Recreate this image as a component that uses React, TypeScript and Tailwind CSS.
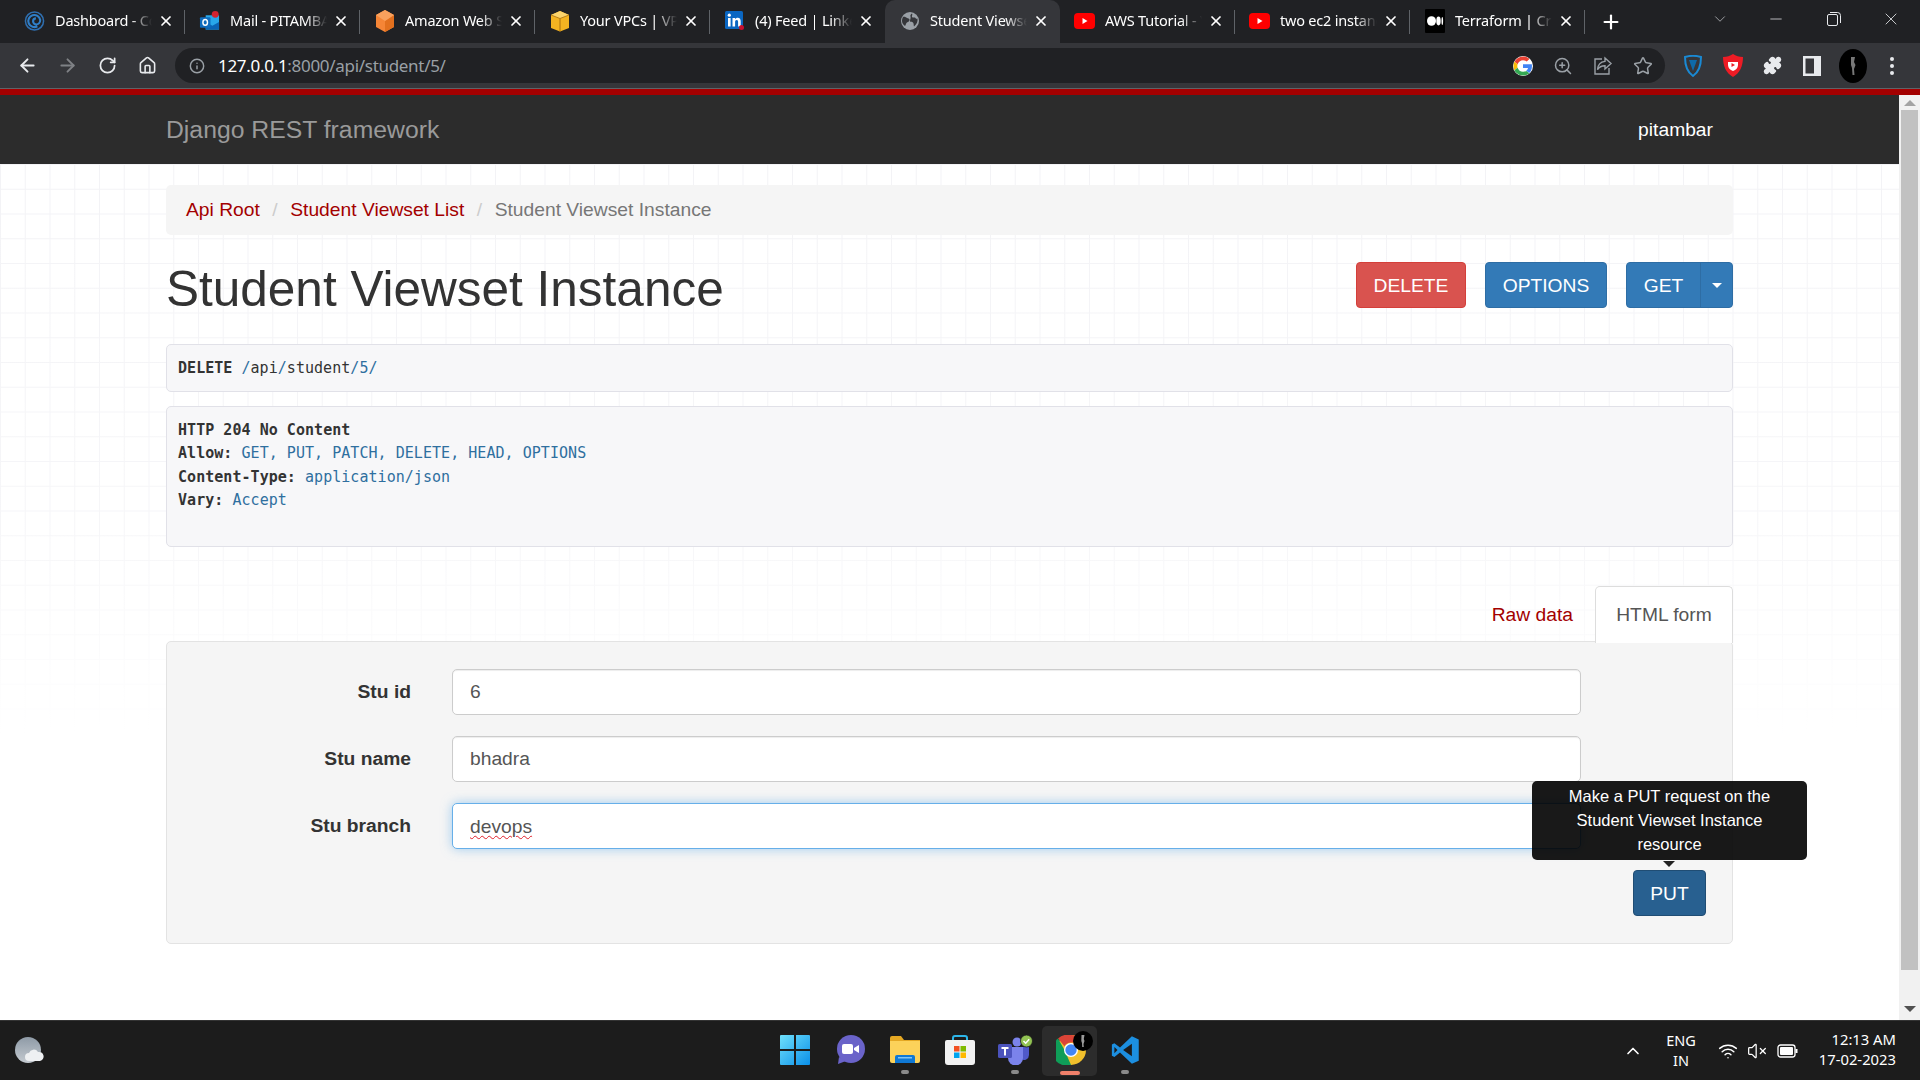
import type { ReactNode } from "react";
import {
  ArrowLeft,
  ArrowRight,
  RotateCw,
  Home,
  Info,
  ZoomIn,
  Star,
  Puzzle,
  X,
  Plus,
  ChevronDown,
  ChevronUp,
  Minus,
  Wifi,
  VolumeX,
} from "lucide-react";

const sans = "font-['Liberation_Sans',Arial,sans-serif]";

function DashIcon() {
  return (
    <svg width="22" height="22" viewBox="0 0 22 22" fill="none">
      <circle cx="11" cy="11" r="9.5" stroke="#2f6fb0" strokeWidth="1.6" />
      <path d="M14 16.5a6.3 6.3 0 1 1 3-6.5c0 3-2.2 4.6-4.2 4.6a3.3 3.3 0 0 1-3.3-3.3c0-1.8 1.4-3 3-3" stroke="#2f7fc8" strokeWidth="2.2" />
    </svg>
  );
}

function OutlookIcon() {
  return (
    <svg width="22" height="22" viewBox="0 0 22 22">
      <rect x="7" y="5" width="14" height="15" fill="#28a8ea" />
      <path d="M7 12l7 4 7-4v8H7z" fill="#0a64b4" />
      <rect x="1" y="7" width="11" height="11" rx="1" fill="#0f6cbd" />
      <ellipse cx="6.5" cy="12.5" rx="2.4" ry="3" fill="none" stroke="#fff" strokeWidth="1.5" />
      <circle cx="17" cy="4" r="3.6" fill="#d3232f" />
    </svg>
  );
}

function HexIcon() {
  return (
    <svg width="20" height="24" viewBox="0 0 20 24">
      <path d="M10 1l9 5v12l-9 5-9-5V6z" fill="#f58536" />
      <path d="M10 12l9-6v12l-9 5z" fill="#e2701e" />
      <path d="M10 1l9 5-9 6-9-6z" fill="#f9a15d" />
    </svg>
  );
}

function BoxIcon() {
  return (
    <svg width="20" height="22" viewBox="0 0 20 22">
      <path d="M1 5l9-4 9 4v13l-9 3.5L1 18z" fill="#f4b321" />
      <path d="M1 5l9 3.5L19 5l-9-4z" fill="#fbd36b" />
      <path d="M10 8.5v13" stroke="#a86f0d" strokeWidth="1" />
      <path d="M1 5l9 3.5L19 5" stroke="#a86f0d" strokeWidth="0.8" fill="none" />
    </svg>
  );
}

function LinkedInIcon() {
  return (
    <svg width="20" height="22" viewBox="0 0 20 22">
      <rect x="0" y="1" width="18" height="18" rx="1.5" fill="#0a66c2" />
      <rect x="3" y="8" width="2.6" height="8.5" fill="#fff" />
      <circle cx="4.3" cy="5.2" r="1.6" fill="#fff" />
      <path d="M7.5 8h2.5v1.3c.6-1 1.6-1.5 2.7-1.5 2.2 0 3 1.4 3 3.7v5h-2.6v-4.4c0-1.2-.3-2-1.4-2s-1.6.9-1.6 2v4.4H7.5z" fill="#fff" />
      <circle cx="16.5" cy="17.5" r="2.5" fill="#c8102e" />
    </svg>
  );
}

function GlobeIcon() {
  return (
    <svg width="20" height="20" viewBox="0 0 20 20">
      <circle cx="10" cy="10" r="9" fill="#9aa0a6" />
      <path d="M3 6c2-.5 3 .5 4 1s2 0 2.5 1.5S8 11 7 11.5 6 14 5 15c-1.5-1-3-3-3-5 0-1.5.5-3 1-4zM12 2.5c1 1-.5 2.5 0 3.5s3 0 3.5 1 1.5 1 2 .5c.5 3-1 6-3.500 8-.5-1 0-3-1-4s-3 0-3-1.500 1-3 .5-4.500S11 3 12 2.500z" fill="#35363a" />
    </svg>
  );
}

function YouTubeIcon() {
  return (
    <svg width="21" height="16" viewBox="0 0 21 16">
      <rect width="21" height="16" rx="4" fill="#f00" />
      <path d="M8.5 5l5 3-5 3z" fill="#fff" />
    </svg>
  );
}

function MediumIcon() {
  return (
    <svg width="20" height="24" viewBox="0 0 20 24">
      <rect width="20" height="24" rx="1" fill="#000" />
      <ellipse cx="6.5" cy="12" rx="4.5" ry="4.8" fill="#fff" />
      <ellipse cx="13.5" cy="12" rx="2.2" ry="4.4" fill="#fff" />
      <ellipse cx="17.3" cy="12" rx="0.8" ry="4" fill="#fff" />
    </svg>
  );
}

type TabInfo = { title: string; icon: ReactNode; active?: boolean; sep?: boolean };

const tabs: TabInfo[] = [
  { title: "Dashboard - Console", icon: <DashIcon />, sep: true },
  { title: "Mail - PITAMBAR", icon: <OutlookIcon />, sep: true },
  { title: "Amazon Web Services", icon: <HexIcon />, sep: true },
  { title: "Your VPCs | VPC", icon: <BoxIcon />, sep: true },
  { title: "(4) Feed | LinkedIn", icon: <LinkedInIcon /> },
  { title: "Student Viewset", icon: <GlobeIcon />, active: true },
  { title: "AWS Tutorial - YT", icon: <YouTubeIcon />, sep: true },
  { title: "two ec2 instances", icon: <YouTubeIcon />, sep: true },
  { title: "Terraform | Create", icon: <MediumIcon />, sep: true },
];

function Tab({ title, icon, active, sep }: TabInfo) {
  return (
    <div className={`relative flex h-[43px] w-[175px] shrink-0 items-center pb-[2px] pl-[14px] ${active ? "rounded-t-[10px] bg-[#35363a]" : ""}`}>
      <div className="flex w-[21px] shrink-0 justify-center">{icon}</div>
      <div className="ml-[10px] w-[97px] overflow-hidden font-['Noto_Sans',sans-serif] text-[14.5px] tracking-[-0.2px] whitespace-nowrap text-white [mask-image:linear-gradient(90deg,#000_78%,transparent_100%)]">
        {title}
      </div>
      <X className="ml-[6px] size-[16px] shrink-0 text-white" strokeWidth={2.6} />
      {sep && <div className="absolute top-[10px] right-0 h-[24px] w-px bg-[#5f6368]" />}
    </div>
  );
}

function TabStrip() {
  return (
    <div className="flex h-[43px] items-center bg-[#202124] pl-[10px]">
      {tabs.map((t) => (
        <Tab key={t.title} {...t} />
      ))}
      <Plus className="ml-[15px] size-[22px] text-white" strokeWidth={2.4} />
      <ChevronDown className="ml-[89px] size-[18px] -translate-y-[3px] text-[#c4c6c9]" strokeWidth={1} />
      <Minus className="ml-[38px] size-[18px] -translate-y-[3px] text-[#e8eaed]" strokeWidth={1} />
      <svg className="ml-[42px] -translate-y-[3px]" width="14" height="14" viewBox="0 0 14 14" fill="none" stroke="#e8eaed">
        <rect x="0.5" y="2.5" width="10" height="11" rx="1.5" />
        <path d="M3 .5h7.5a3 3 0 0 1 3 3V11" />
      </svg>
      <X className="ml-[40px] size-[20px] -translate-y-[3px] text-[#e8eaed]" strokeWidth={1} />
    </div>
  );
}

function GoogleIcon() {
  return (
    <svg width="20" height="20" viewBox="0 0 48 48" className="rounded-full bg-white">
      <path fill="#EA4335" d="M24 10c3.5 0 6.5 1.2 9 3.4l6.5-6.500C35.500 3.200 30.200 1 24 1 15 1 7.200 6.200 3.400 13.700l7.600 5.900C12.800 14 17.900 10 24 10z" />
      <path fill="#4285F4" d="M45.500 24.500c0-1.600-.1-3.100-.4-4.500H24v8.500h12.100c-.5 2.800-2.100 5.100-4.500 6.700l7.300 5.700c4.300-4 6.600-9.800 6.600-16.400z" />
      <path fill="#FBBC05" d="M11 28.400c-.5-1.400-.7-2.900-.7-4.400s.3-3 .7-4.400l-7.600-5.900C1.900 16.800 1 20.300 1 24s.9 7.200 2.400 10.300z" />
      <path fill="#34A853" d="M24 47c6.200 0 11.400-2 15.200-5.600l-7.300-5.700c-2 1.400-4.700 2.200-7.900 2.200-6.100 0-11.200-4-13-9.600l-7.600 5.900C7.200 41.800 15 47 24 47z" />
    </svg>
  );
}

function ShareIcon() {
  return (
    <svg width="20" height="20" viewBox="0 0 20 20" fill="none" stroke="#9aa0a6" strokeWidth="1.4">
      <path d="M9 3H2v15h14v-6" />
      <path d="M12 2l6 5.5-6 5.5V9.700c-3.500 0-6 1.300-7.500 4 .3-4.500 3-7.800 7.500-8.300z" />
    </svg>
  );
}

function ToolBar() {
  return (
    <div className="flex h-[45px] items-center bg-[#35363a] pl-[17px]">
      <ArrowLeft className="size-[21px] text-[#e8eaed]" strokeWidth={2.2} />
      <ArrowRight className="ml-[19px] size-[21px] text-[#7f8185]" strokeWidth={2.2} />
      <RotateCw className="ml-[20px] size-[19px] text-[#e8eaed]" strokeWidth={2.2} />
      <Home className="ml-[21px] size-[19px] text-[#e8eaed]" strokeWidth={2} />
      <div className="ml-[18px] flex h-[35px] w-[1490px] items-center rounded-full bg-[#202124] pl-[14px]">
        <Info className="size-[16px] text-[#9aa0a6]" strokeWidth={2.2} />
        <div className="ml-[13px] font-['Noto_Sans',sans-serif] text-[17px] tracking-[-0.3px] text-white">
          127.0.0.1<span className="text-[#9aa0a6]">:8000/api/student/5/</span>
        </div>
        <div className="ml-auto flex items-center gap-[20px] pr-[12px]">
          <GoogleIcon />
          <ZoomIn className="size-[20px] text-[#9aa0a6]" strokeWidth={1.8} />
          <ShareIcon />
          <Star className="size-[20px] text-[#9aa0a6]" strokeWidth={1.8} />
        </div>
      </div>
      <div className="ml-[19px] flex items-center gap-[21px]">
        <svg width="18" height="22" viewBox="0 0 18 22" fill="none">
          <path d="M1 2c5-1.500 11-1.500 16 0 0 8-2 15-8 19C3 17 1 10 1 2z" stroke="#1a8ad4" strokeWidth="2" />
          <path d="M5 5h8l-4 11z" fill="#0e6aa8" />
        </svg>
        <svg width="20" height="23" viewBox="0 0 20 23">
          <path d="M10 0c3 2 6 3 10 3 0 9-3 16-10 20C3 19 0 12 0 3c4 0 7-1 10-3z" fill="#ee1c25" />
          <path d="M5 8h10v3c0 3-2 5-5 6-3-1-5-3-5-6z" fill="#fff" />
          <path d="M8.5 9l3.500 2-3.500 2z" fill="#ee1c25" />
        </svg>
        <Puzzle className="-ml-px size-[19px] fill-[#e8eaed] text-[#e8eaed]" />
        <svg width="18" height="20" viewBox="0 0 18 20">
          <path d="M0 0h18v20H0z" fill="#e8eaed" />
          <path d="M2.5 2.5H11v15H2.5z" fill="#35363a" />
        </svg>
        <svg className="-ml-[3px]" width="28" height="34" viewBox="0 0 28 34">
          <ellipse cx="14" cy="17" rx="14" ry="17" fill="#000" />
          <path d="M12 8h4l-1 5 1.500 3-1.500 4 .5 6h-2l-.5-7-1-3z" fill="#777" />
        </svg>
        <svg className="ml-[2px]" width="4" height="18" viewBox="0 0 4 18" fill="#e8eaed">
          <circle cx="2" cy="2" r="2" />
          <circle cx="2" cy="9" r="2" />
          <circle cx="2" cy="16" r="2" />
        </svg>
      </div>
    </div>
  );
}

function Scrollbar() {
  return (
    <div className="relative flex w-[21px] shrink-0 flex-col items-center bg-[#f1f1f1]">
      <div className="mt-[5px] h-0 w-0 border-x-[6px] border-b-[6px] border-x-transparent border-b-[#a3a3a3]" />
      <div className="mt-[4px] h-[860px] w-[17px] bg-[#c1c1c1]" />
      <div className="mt-[36px] h-0 w-0 border-x-[6px] border-t-[6px] border-x-transparent border-t-[#505050]" />
    </div>
  );
}

function Btn({ label, className }: { label: string; className: string }) {
  return (
    <div className={`flex h-[46px] items-center justify-center rounded-[4px] border pt-[2px] text-[19.25px] text-white ${className}`}>
      {label}
    </div>
  );
}

function FormRow({ label, value, focus }: { label: string; value: ReactNode; focus?: boolean }) {
  return (
    <div className="flex h-[46px] items-center">
      <div className="w-[244px] text-right text-[19.25px] font-bold text-[#333]">{label}</div>
      <div
        className={`ml-[41px] flex h-[46px] w-[1129px] items-center rounded-[5px] border bg-white pl-[17px] text-[19.25px] text-[#555] ${
          focus
            ? "border-[#66afe9] shadow-[0_0_11px_rgba(102,175,233,0.6)]"
            : "border-[#ccc] shadow-[inset_0_1px_1px_rgba(0,0,0,0.075)]"
        }`}
      >
        {value}
      </div>
    </div>
  );
}

function Page() {
  return (
    <div className={`flex min-w-0 flex-1 flex-col ${sans}`}>
      <div className="flex h-[69px] shrink-0 items-center justify-between bg-[#2c2c2c] pr-[186px] pl-[166px]">
        <span className="text-[24.75px] text-[#9a9a9a]">Django REST framework</span>
        <span className="pt-px text-[19.25px] text-white">pitambar</span>
      </div>
      <div className="flex-1 bg-white bg-[linear-gradient(to_bottom,rgba(255,255,255,0)_0,rgba(255,255,255,0.25)_360px,#fff_570px),linear-gradient(#f3f3f6_1px,transparent_1px),linear-gradient(90deg,#f3f3f6_1px,transparent_1px)] bg-[length:100%_100%,24.75px_24.75px,24.75px_24.75px] px-[166px] pt-[21px]">
        <div className="w-[1567px]">
          <div className="flex h-[50px] items-center rounded-[5px] bg-[#f5f5f5] pl-[20px] text-[19.25px]">
            <span className="text-[#a30000]">Api Root</span>
            <span className="px-[12.5px] text-[#ccc]">/</span>
            <span className="text-[#a30000]">Student Viewset List</span>
            <span className="px-[12.5px] text-[#ccc]">/</span>
            <span className="text-[#777]">Student Viewset Instance</span>
          </div>

          <div className="mt-[27px] flex h-[82px] items-start justify-between">
            <h1 className="text-[49.5px] leading-[54px] text-[#333]">Student Viewset Instance</h1>
            <div className="flex gap-[19px]">
              <Btn label="DELETE" className="w-[110px] border-[#d43f3a] bg-[#d9534f]" />
              <Btn label="OPTIONS" className="w-[122px] border-[#2e6da4] bg-[#337ab7]" />
              <div className="flex h-[46px] w-[107px] rounded-[4px] border border-[#2e6da4] bg-[#337ab7] text-white">
                <div className="flex w-[74px] items-center justify-center border-r border-[#2e6da4] pt-[2px] text-[19.25px]">GET</div>
                <div className="flex flex-1 items-center justify-center">
                  <div className="mt-[1px] h-0 w-0 border-x-[5.5px] border-t-[5.5px] border-x-transparent border-t-white" />
                </div>
              </div>
            </div>
          </div>

          <div className="font-['DejaVu_Sans_Mono',monospace] text-[15px] leading-[23.57px] tracking-[0.04px] text-[#333]">
            <div className="flex h-[48px] items-center rounded-[5px] border border-[#e1e1e8] bg-[#f7f7f9] pt-px pl-[11px]">
              <b className="font-bold">DELETE</b>
              <span className="ml-[9px]">
                <span className="text-[#2f6f9f]">/</span>api<span className="text-[#2f6f9f]">/</span>student<span className="text-[#2f6f9f]">/</span>
                <span className="text-[#2f6f9f]">5/</span>
              </span>
            </div>
            <div className="mt-[14px] h-[141px] rounded-[5px] border border-[#e1e1e8] bg-[#f7f7f9] pt-[11.5px] pl-[11px]">
              <div className="font-bold">HTTP 204 No Content</div>
              <div>
                <b>Allow:</b> <span className="text-[#2f6f9f]">GET, PUT, PATCH, DELETE, HEAD, OPTIONS</span>
              </div>
              <div>
                <b>Content-Type:</b> <span className="text-[#2f6f9f]">application/json</span>
              </div>
              <div>
                <b>Vary:</b> <span className="text-[#2f6f9f]">Accept</span>
              </div>
            </div>
          </div>

          <div className="mt-[39px] flex h-[56px] items-center justify-end">
            <span className="mr-[22px] pt-[2px] text-[19.25px] text-[#a30000]">Raw data</span>
            <div className="relative z-10 flex h-[57px] w-[138px] items-center justify-center rounded-t-[5px] border border-b-0 border-[#ddd] bg-white pt-px text-[19.25px] text-[#555]">
              HTML form
            </div>
          </div>

          <div className="relative -mt-px flex h-[303px] flex-col gap-[21px] rounded-[5px] border border-[#e3e3e3] bg-[#f5f5f5] pt-[27px] pb-[25px]">
            <FormRow label="Stu id" value="6" />
            <FormRow label="Stu name" value="bhadra" />
            <FormRow
              label="Stu branch"
              focus
              value={<span className="pt-[2px] underline decoration-[#e0202a] decoration-wavy decoration-1 underline-offset-2">devops</span>}
            />
            <div className="flex justify-end pr-[26px]">
              <div className="flex h-[46px] w-[73px] items-center justify-center rounded-[4px] border border-[#204d74] bg-[#286090] pt-[2px] text-[19.25px] text-white">
                PUT
              </div>
            </div>
            <div className="absolute top-[139px] left-[1365px] flex h-[79px] w-[275px] items-center justify-center rounded-[5px] bg-[#000]/90 px-[20px] pb-[2px] text-center text-[16.5px] leading-[24px] text-white">
              Make a PUT request on the Student Viewset Instance resource
              <div className="absolute top-[80px] left-[131px] h-0 w-0 border-x-[6px] border-t-[6px] border-x-transparent border-t-[#222]" />
            </div>
          </div>
        </div>
      </div>
    </div>
  );
}

function TaskSlot({ children, dot, active }: { children: ReactNode; dot?: boolean; active?: boolean }) {
  return (
    <div className={`relative flex h-[50px] w-[55px] shrink-0 items-center justify-center rounded-[5px] pb-[2px] ${active ? "bg-[#2c2c2c]" : ""}`}>
      {children}
      {dot && <div className="absolute bottom-[2px] h-[4px] w-[8px] rounded-full bg-[#8a8a8a]" />}
      {active && <div className="absolute bottom-[1px] h-[4px] w-[20px] rounded-full bg-[#f0806a]" />}
    </div>
  );
}

function TaskBar() {
  return (
    <div className="flex h-[60px] shrink-0 items-center border-t border-[#333] bg-[#1c1c1c] font-['Noto_Sans',sans-serif] text-white">
      <svg className="ml-[15px]" width="29" height="27" viewBox="0 0 29 27">
        <defs>
          <linearGradient id="moon" x1="0" y1="0" x2="0" y2="1">
            <stop offset="0" stopColor="#8e9aa6" />
            <stop offset="1" stopColor="#c4cad0" />
          </linearGradient>
        </defs>
        <circle cx="13" cy="13" r="13" fill="url(#moon)" />
        <path d="M14 24a4 4 0 0 1 0-8 5 5 0 0 1 9-1 4.5 4.5 0 0 1 2 9z" fill="#eef0f2" />
      </svg>
      <div className="ml-[723px] flex items-center">
        <TaskSlot>
          <svg width="30" height="30" viewBox="0 0 30 30">
            <defs>
              <linearGradient id="win" x1="0" y1="0" x2="1" y2="1">
                <stop offset="0" stopColor="#6fe0fb" />
                <stop offset="1" stopColor="#0a8fe8" />
              </linearGradient>
            </defs>
            <path d="M0 1a1 1 0 0 1 1-1h13v14H0zM16 0h13a1 1 0 0 1 1 1v13H16zM0 16h14v14H1a1 1 0 0 1-1-1zM16 16h14v13a1 1 0 0 1-1 1H16z" fill="url(#win)" />
          </svg>
        </TaskSlot>
        <TaskSlot>
          <svg width="30" height="30" viewBox="0 0 30 30">
            <circle cx="16" cy="14" r="14" fill="#6a63c9" />
            <path d="M4 22l-1 7 8-3z" fill="#6a63c9" />
            <rect x="7" y="9" width="11" height="10" rx="2" fill="#fff" />
            <path d="M19 13l5-3v8l-5-3z" fill="#fff" />
          </svg>
        </TaskSlot>
        <TaskSlot dot>
          <svg width="30" height="27" viewBox="0 0 30 27">
            <path d="M0 2a2 2 0 0 1 2-2h9l3 4h16v6H0z" fill="#e5a823" />
            <path d="M0 5h30v20a2 2 0 0 1-2 2H2a2 2 0 0 1-2-2z" fill="#fcd25a" />
            <path d="M5 21a2 2 0 0 1 2-2h16a2 2 0 0 1 2 2v6H5z" fill="#0f78d4" />
            <rect x="8" y="21" width="14" height="1.5" fill="#7fc4f5" />
          </svg>
        </TaskSlot>
        <TaskSlot>
          <svg width="30" height="30" viewBox="0 0 30 30">
            <path d="M8 6V3a2 2 0 0 1 2-2h10a2 2 0 0 1 2 2v3" fill="none" stroke="#2cb5e8" strokeWidth="2" />
            <path d="M0 7a2 2 0 0 1 2-2h26a2 2 0 0 1 2 2v20a3 3 0 0 1-3 3H3a3 3 0 0 1-3-3z" fill="#f2f2f2" />
            <rect x="9" y="11" width="5.5" height="5.5" fill="#f25022" />
            <rect x="15.5" y="11" width="5.5" height="5.5" fill="#7fba00" />
            <rect x="9" y="17.5" width="5.5" height="5.5" fill="#00a4ef" />
            <rect x="15.5" y="17.5" width="5.5" height="5.5" fill="#ffb900" />
          </svg>
        </TaskSlot>
        <TaskSlot dot>
          <svg width="36" height="30" viewBox="0 0 36 30">
            <circle cx="20" cy="7" r="4.5" fill="#7b83eb" />
            <circle cx="29" cy="9" r="3" fill="#5059c9" />
            <path d="M24 12h8v8a5 5 0 0 1-8 4z" fill="#5059c9" />
            <path d="M11 12h15v11a7 7 0 0 1-15 0z" fill="#7b83eb" />
            <rect x="1" y="9" width="14" height="14" rx="1.5" fill="#4b53bc" />
            <path d="M4.5 12h7v2H9v6.500H7V14H4.500z" fill="#fff" />
            <circle cx="29.5" cy="6" r="6" fill="#92c353" stroke="#1c1c1c" strokeWidth="0.8" />
            <path d="M26.5 6l2.200 2.200 3.500-4" stroke="#fff" strokeWidth="1.5" fill="none" />
          </svg>
        </TaskSlot>
        <TaskSlot active>
          <div className="relative ml-[2px] size-[30px]">
            <svg width="30" height="30" viewBox="0 0 30 30">
              <circle cx="15" cy="15" r="15" fill="#f1c02c" />
              <path d="M15 0a15 15 0 0 1 13 7.5H15a7.5 7.5 0 0 0-6.500 3.750L2 3.500A15 15 0 0 1 15 0z" fill="#db4437" />
              <path d="M2 3.500l6.500 11.500 6.500 15A15 15 0 0 1 2 3.500z" fill="#0f9d58" />
              <circle cx="15" cy="15" r="7" fill="#fff" />
              <circle cx="15" cy="15" r="5.7" fill="#4285f4" />
            </svg>
            <svg className="absolute -top-[4px] -right-[7px]" width="20" height="20" viewBox="0 0 20 20">
              <circle cx="10" cy="10" r="10" fill="#000" />
              <path d="M8.5 4h3l-.7 4 .7 2-1 3 .3 3H9.200L9 12l-.7-2z" fill="#999" />
            </svg>
          </div>
        </TaskSlot>
        <TaskSlot dot>
          <svg width="30" height="30" viewBox="0 0 24 24">
            <path d="M17.5 1L8 10 3.500 6.500 1.500 7.500v9l2 1L8 14l9.500 9L23 20.500v-17z" fill="#1c8fe0" />
            <path d="M17.5 7L10.500 12l7 5z" fill="#1c1c1c" />
            <path d="M3.500 9.500L6 12l-2.500 2.500z" fill="#1c1c1c" />
          </svg>
        </TaskSlot>
      </div>
      <ChevronUp className="ml-[471px] size-[20px]" strokeWidth={2} />
      <div className="ml-[15px] w-[46px] pb-[2px] text-center text-[14.5px] leading-[20px]">
        ENG
        <br />
        IN
      </div>
      <Wifi className="ml-[14px] size-[20px]" strokeWidth={1.8} />
      <VolumeX className="ml-[9px] size-[20px]" strokeWidth={1.5} />
      <svg className="ml-[10px]" width="21" height="14" viewBox="0 0 21 14" fill="none">
        <rect x="1" y="1" width="17" height="12" rx="2.5" stroke="#fff" strokeWidth="1.3" />
        <rect x="3" y="3" width="13" height="8" rx="1" fill="#fff" />
        <path d="M19.5 5v4" stroke="#fff" strokeWidth="2" />
      </svg>
      <div className="ml-auto pr-[24px] pb-[4px] text-right text-[14.8px] leading-[20px]">
        12:13 AM
        <br />
        17-02-2023
      </div>
    </div>
  );
}

export default function App() {
  return (
    <div className="flex h-screen w-full flex-col overflow-hidden bg-white">
      <TabStrip />
      <ToolBar />
      <div className="h-px bg-[#5f6368]" />
      <div className="h-[6px] bg-[#a30000]" />
      <div className="flex min-h-0 flex-1">
        <Page />
        <Scrollbar />
      </div>
      <TaskBar />
    </div>
  );
}
